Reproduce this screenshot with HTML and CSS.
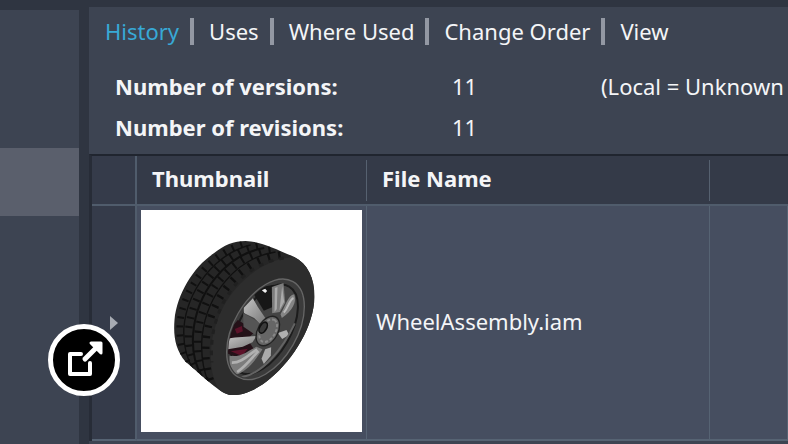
FILE: index.html
```
<!DOCTYPE html>
<html lang="en">
<head>
    <meta charset="UTF-8">
    <meta name="viewport" content="width=device-width, initial-scale=1.0">
    <title>WheelAssembly.iam - History</title>
    <link rel="stylesheet" href="styles.css">
</head>
<body>
    <div class="app">
        <aside class="sidebar">
            <div class="sidebar-selected"></div>
        </aside>

        <main class="panel">
            <nav class="tabs">
                <a class="active" href="#history">History</a>
                <a href="#uses">Uses</a>
                <a href="#where-used">Where Used</a>
                <a href="#change-order">Change Order</a>
                <a href="#view">View</a>
            </nav>

            <div class="summary">
                <strong>Number of versions:</strong>
                <span>11</span>
                <span>(Local = Unknown</span>
                <strong>Number of revisions:</strong>
                <span>11</span>
            </div>

            <table class="files">
                <colgroup>
                    <col class="col-marker">
                    <col class="col-thumb">
                    <col class="col-name">
                    <col>
                </colgroup>
                <thead>
                    <tr>
                        <th class="marker"></th>
                        <th class="divided">Thumbnail</th>
                        <th class="divided">File Name</th>
                        <th></th>
                    </tr>
                </thead>
                <tbody>
                    <tr>
                        <td class="marker">
                            <svg class="arrow" viewBox="0 0 8 14"><path d="M0 0L8 7L0 14Z" fill="#a7abb3"/></svg>
                        </td>
                        <td class="thumb">
                            <svg class="wheel" viewBox="-57 -60 660 666" role="img" aria-label="Wheel assembly">
                                <defs>
                                    <clipPath id="tire">
                                        <path d="M255 33C305 35 340 55 400 80C442 100 462 145 462 200C460 290 400 385 330 445C290 480 240 500 205 494C175 485 140 450 75 395C45 360 38 320 42 270C50 190 100 110 160 70C190 45 220 33 255 33Z"/>
                                    </clipPath>
                                    <clipPath id="rim">
                                        <ellipse cx="315" cy="298" rx="160" ry="91" transform="rotate(-60 315 298)"/>
                                    </clipPath>
                                    <linearGradient id="metal" x1="0" y1="0" x2="1" y2="1">
                                        <stop offset="0" stop-color="#c4c4c4"/>
                                        <stop offset="1" stop-color="#777"/>
                                    </linearGradient>
                                </defs>
                                <g clip-path="url(#tire)">
                                    <rect width="510" height="525" fill="#262626"/>
                                    <!-- tread -->
                                    <g fill="none" stroke="#101010">
                                        <path d="M245 43C145 75 65 180 58 285C56 335 65 370 85 405" stroke-width="20" stroke-dasharray="6 21"/>
                                        <path d="M292 48C180 70 93 185 84 305C81 355 92 395 115 430" stroke-width="22" stroke-dasharray="6 22"/>
                                        <path d="M330 60C210 78 124 190 112 315C108 370 116 410 135 450" stroke-width="22" stroke-dasharray="6 23"/>
                                        <path d="M360 75C245 90 154 195 138 320C132 375 138 425 155 465" stroke-width="22" stroke-dasharray="7 25"/>
                                        <path d="M270 45C162 72 79 182 70 295C68 345 77 385 100 420" stroke-width="4"/>
                                        <path d="M311 54C195 74 108 188 98 310C94 362 103 405 125 440" stroke-width="6"/>
                                        <path d="M345 66C227 84 139 193 125 318C120 372 127 418 145 460" stroke-width="4"/>
                                    </g>
                                    <!-- side wall -->
                                    <path d="M402 80C330 86 270 123 222 180C174 238 151 312 151 378C151 425 162 465 184 488L220 510L490 430V110Z" fill="#2d2d2d"/>
                                    <path d="M370 84C280 98 221 153 187 221C160 276 149 333 154 397" fill="none" stroke="#202020" stroke-width="9" stroke-dasharray="14 18"/>
                                </g>
                                <ellipse cx="315" cy="298" rx="165" ry="95" transform="rotate(-60 315 298)" fill="#3b3b3b" stroke="#666" stroke-width="4"/>
                                <g clip-path="url(#rim)">
                                    <ellipse cx="312" cy="298" rx="148" ry="78" transform="rotate(-60 312 298)" fill="#444" stroke="#1c1c1c" stroke-width="6"/>
                                    <path d="M281 194L300 172L340 164L338 230L310 242Z" fill="#171717"/>
                                    <path d="M197 310L232 270L286 303L260 327L282 360L235 383L198 370Z" fill="#241118"/>
                                    <path d="M248 249L297 278L285 315L249 290Z" fill="#555"/>
                                    <path d="M223 297L244 288L247 304L229 311ZM211 364L262 356L244 378Z" fill="#5c1229"/>
                                    <path d="M250 233L277 205L292 231L315 265L300 283L281 264L250 249Z" fill="url(#metal)"/>
                                    <path d="M201 327C230 319 260 322 288 318L276 337L247 350L201 358Z" fill="url(#metal)"/>
                                    <path d="M334 171L369 159L374 218L358 246L335 250Z" fill="#7c7c7c"/>
                                    <path d="M343 174L351 171L349 237L342 246ZM365 169L371 215L357 241Z" fill="#aaa"/>
                                    <path d="M360 253C376 226 382 196 401 193C410 217 395 244 364 264Z" fill="#858585"/>
                                    <path d="M370 248C384 232 386 210 399 204" fill="none" stroke="#bbb" stroke-width="6"/>
                                    <path d="M207 377C240 384 268 359 288 350L306 358C280 398 257 425 224 435L207 407Z" fill="#7c7c7c"/>
                                    <path d="M214 398C243 399 264 374 290 358M230 426C258 407 273 384 294 363" fill="none" stroke="#b0b0b0" stroke-width="8"/>
                                    <path d="M314 358L332 352L331 377L310 402L303 386Z" fill="#aaa"/>
                                    <path d="M352 309L378 300L386 315L365 327Z" fill="#b0b0b0"/>
                                    <path d="M243 442C305 431 365 360 403 280" fill="none" stroke="#636363" stroke-width="6"/>
                                    <ellipse cx="322" cy="303" rx="48" ry="30" transform="rotate(-60 322 303)" fill="#666" stroke="#222" stroke-width="4"/>
                                    <ellipse cx="323" cy="302" rx="37" ry="22" transform="rotate(-60 323 302)" fill="none" stroke="#888" stroke-width="6" stroke-dasharray="9 6"/>
                                    <ellipse cx="308" cy="293" rx="18" ry="10" transform="rotate(-60 308 293)" fill="#3a3a3a" stroke="#111" stroke-width="5"/>
                                    <path d="M304 181L314 176L320 183L314 189Z" fill="#eee"/>
                                </g>
                            </svg>
                        </td>
                        <td class="name">WheelAssembly.iam</td>
                        <td></td>
                    </tr>
                </tbody>
            </table>
        </main>
    </div>

    <button class="expand" type="button" aria-label="Open image">
        <svg viewBox="0 0 72 72" fill="none" stroke="#fff" stroke-width="4" stroke-linejoin="round" stroke-linecap="round">
            <path d="M33 30H22V50H42V39"/>
            <path d="M37 35L50 22" stroke-width="5"/>
            <path d="M43 19H53V29Z" fill="#fff" stroke-width="3"/>
        </svg>
    </button>
</body>
</html>
```
FILE: styles.css
```
* {
    box-sizing: border-box;
}

body {
    margin: 0;
    background-color: #2f3541;
    color: #f4f5f7;
    font-family: "Noto Sans", "Open Sans", sans-serif;
    font-size: 22px;
    overflow: hidden;
}

.app {
    display: flex;
    gap: 10px;
    min-height: 100vh;
}

.sidebar {
    flex: 0 0 79px;
    margin-top: 10px;
    padding-top: 138px;
    background-color: #3d4452;
}

.sidebar-selected {
    height: 68px;
    background-color: #5a5f6c;
}

.panel {
    flex: 1;
    min-width: 0;
    margin-top: 7px;
    background-color: #3d4452;
}

/* Tabs */
.tabs {
    display: flex;
    align-items: center;
    height: 48px;
    padding-left: 16px;
    white-space: nowrap;
}

.tabs a {
    display: flex;
    align-items: center;
    color: #f4f5f7;
    text-decoration: none;
}

.tabs a.active {
    color: #38a9d6;
}

.tabs a + a::before {
    content: "";
    width: 4px;
    height: 27px;
    margin: 0 15px 0 11px;
    background-color: #9398a3;
}

/* Version counts */
.summary {
    display: grid;
    grid-template-columns: 337px 149px 1fr;
    padding: 11px 0 6px 26px;
    line-height: 41px;
    white-space: nowrap;
}

/* File list */
.files {
    width: 100%;
    table-layout: fixed;
    border-collapse: separate;
    border-spacing: 0;
    border-top: 2px solid #20252f;
    border-left: 3px solid #272c37;
}

.col-marker {
    width: 45px;
}

.col-thumb {
    width: 230px;
}

.col-name {
    width: 343px;
}

.files th {
    height: 50px;
    padding: 0 0 4px 15px;
    text-align: left;
    background-color: #343a48;
    border-bottom: 2px solid #505c6c;
}

.files .divided {
    background-image: linear-gradient(#566170, #566170);
    background-repeat: no-repeat;
    background-position: right 4px;
    background-size: 1px 41px;
}

.files td {
    height: 235px;
    padding: 0;
    background-color: #464e60;
    border-right: 1px solid #566373;
    border-bottom: 2px solid #566373;
}

.files .marker {
    background-color: #353b4a;
    border-right: 2px solid #505c6c;
}

.files .thumb {
    padding: 3px 4px 7px;
}

.files .name {
    padding: 0 0 4px 9px;
}

.arrow {
    display: block;
    width: 8px;
    height: 14px;
    margin-left: 18px;
}

.wheel {
    display: block;
    width: 100%;
    height: 222px;
    background-color: #fff;
}

.expand {
    position: absolute;
    left: 48px;
    bottom: 48px;
    width: 72px;
    height: 72px;
    padding: 0;
    border: 5px solid #fff;
    border-radius: 50%;
    background-color: #000;
    cursor: pointer;
}

.expand svg {
    display: block;
    margin: -5px;
    width: 72px;
    height: 72px;
}
```
